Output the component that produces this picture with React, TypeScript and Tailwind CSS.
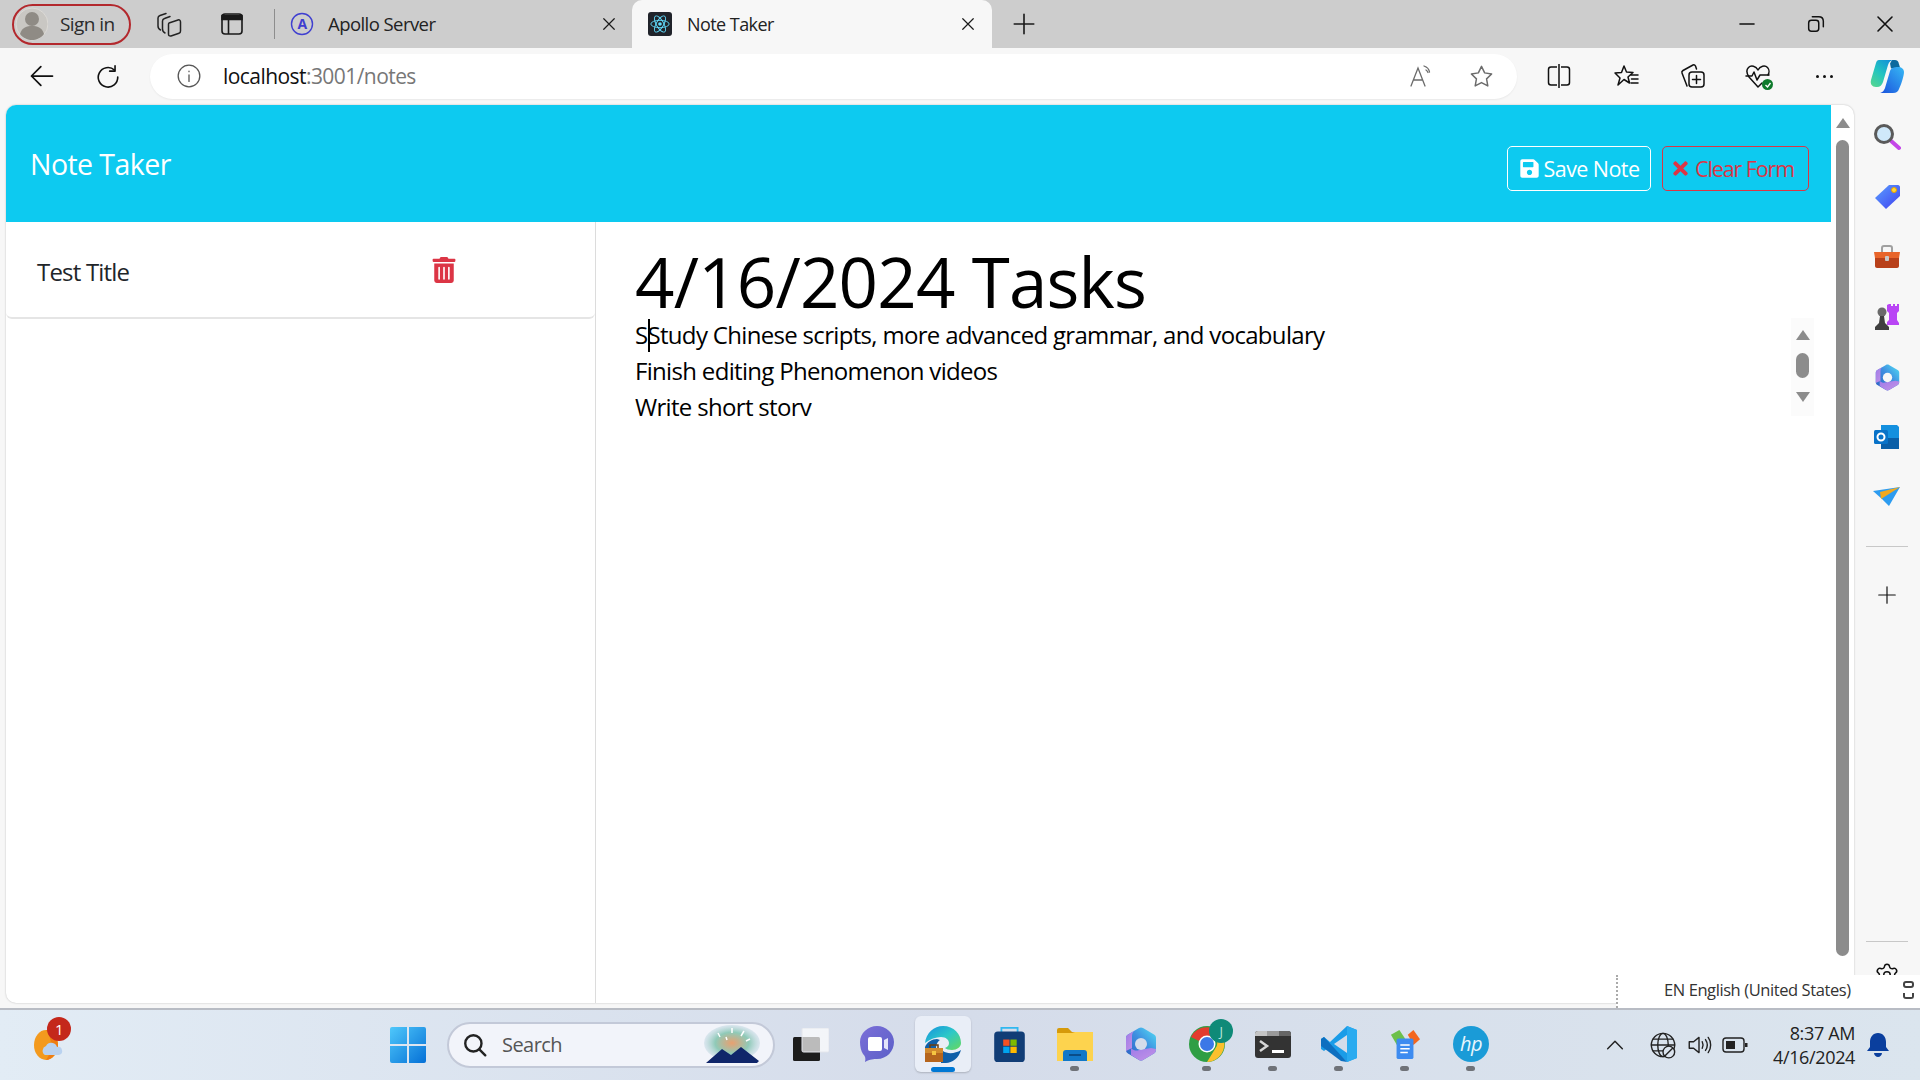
import React from "react";
import { FaSave, FaTimes, FaTrashAlt } from "react-icons/fa";
import { Settings } from "lucide-react";

const Stroke = ({ size = 24, w = 1.5, c = "#1a1a1a", children }: { size?: number; w?: number; c?: string; children: React.ReactNode }) => (
  <svg width={size} height={size} viewBox="0 0 24 24" fill="none" stroke={c} strokeWidth={w} strokeLinecap="round" strokeLinejoin="round">{children}</svg>
);

const TaskIcon = ({ children, dot, className = "" }: { children: React.ReactNode; dot?: boolean; className?: string }) => (
  <div className={"relative flex h-[56px] w-[66px] items-center justify-center " + className}>
    {children}
    {dot && <span className="absolute bottom-[1px] left-[28px] h-[5px] w-[9px] rounded-full bg-[#6f7278]" />}
  </div>
);

function M365({ id, w, h, hole }: { id: string; w: number; h: number; hole: string }) {
  return (
    <svg width={w} height={h} viewBox="0 0 32 34">
      <defs>
        <linearGradient id={id} x1="0" y1="1" x2="1" y2="0">
          <stop offset="0" stopColor="#2a5fc0" />
          <stop offset=".55" stopColor="#3f8ee0" />
          <stop offset="1" stopColor="#52e0f5" />
        </linearGradient>
        <linearGradient id={id + "p"} x1="0" y1="0" x2="1" y2="1">
          <stop offset="0" stopColor="#a07be8" />
          <stop offset="1" stopColor="#c494e6" />
        </linearGradient>
      </defs>
      <path d="M14 1 3 7.500C1.500 8.500 1 9.500 1 11v12c0 1.500.5 2.500 2 3.500l11 6.500c1.300.7 2.700.7 4 0l11-6.500c1.500-1 2-2 2-3.500V11c0-1.500-.5-2.500-2-3.500L18 1c-1.300-.7-2.700-.7-4 0z" fill={`url(#${id})`} />
      <path d="M1 11c0-1.500.5-2.500 2-3.500L9 4c-2 2-2 4-2 6v11L1 24z" fill={`url(#${id}p)`} />
      <path d="M6 21c3 3 6 3 8 2l12-2 5 1c0 2-.5 3.500-2 4.500L18 33c-1.300.7-2.700.7-4 0L6 28z" fill={`url(#${id}p)`} />
      <circle cx="16" cy="17" r="6" fill={hole} />
    </svg>
  );
}

function ReactLogo() {
  return (
    <div className="flex h-[24px] w-[24px] items-center justify-center rounded-[3px] bg-[#20232a]">
      <svg width="22" height="22" viewBox="-12 -12 24 24" fill="none" stroke="#61dafb" strokeWidth="1">
        <circle r="2" fill="#61dafb" stroke="none" />
        <ellipse rx="10" ry="4" />
        <ellipse rx="10" ry="4" transform="rotate(60)" />
        <ellipse rx="10" ry="4" transform="rotate(120)" />
      </svg>
    </div>
  );
}

function TabStrip() {
  return (
    <div className="flex h-[48px] shrink-0 items-center bg-[#cdcdcd]">
      <div className="ml-[12px] flex h-[41px] w-[119px] items-center rounded-full border-2 border-[#b3282d] pl-[2px]">
        <svg width="32" height="34" viewBox="0 0 32 34">
          <circle cx="16" cy="17" r="16" fill="#c9c7c3" stroke="#dcdad6" />
          <circle cx="16" cy="12" r="7" fill="#8f8b85" />
          <path d="M4 27c2-7 7-8 12-8s10 1 12 8c-3 4-8 6-12 6s-9-2-12-6z" fill="#8f8b85" />
        </svg>
        <span className="ml-[12px] text-[19px] leading-none text-[#2b2b2b]">Sign in</span>
      </div>
      <div className="ml-[25px] flex w-[26px] justify-center">
        <svg width="25" height="25" viewBox="0 0 25 25" fill="none" stroke="#222" strokeWidth="1.5" strokeLinejoin="round" strokeLinecap="round">
          <path d="M12 11 21 8c1.500-.5 2.500.5 2.500 2v9c0 1-.5 2-1.500 2.300L14 24c-1.500.3-2.500-.3-2.500-2V12.500c0-.6.1-1.200.5-1.500z" />
          <path d="M8 21c-2-1-2.500-2-2.500-4V9c0-1 .5-2 2-2.500L13 4.500" />
          <path d="M3.500 18C1.500 17 1 16 1 14V6c0-1 .5-2 2-2.500L9 1.500" />
        </svg>
      </div>
      <div className="ml-[37px] flex w-[26px] justify-center">
        <svg width="22" height="22" viewBox="0 0 22 22" fill="none" stroke="#1a1a1a" strokeWidth="1.6">
          <rect x="1" y="1" width="20" height="20" rx="3" />
          <path d="M1 2.500h20v4H1z" fill="#1a1a1a" />
          <path d="M7.500 6v15" />
        </svg>
      </div>
      <div className="ml-[29px] h-[30px] w-px bg-[#8d8d8d]" />
      <div className="flex h-full w-[357px] items-center pl-[15px]">
        <svg width="24" height="24" viewBox="0 0 24 24" fill="none">
          <circle cx="12" cy="12" r="10.500" stroke="#3f3fd0" strokeWidth="1.400" />
          <text x="12" y="17" textAnchor="middle" fontSize="14" fontWeight="700" fill="#3f3fd0" fontFamily="Open Sans">A</text>
        </svg>
        <span className="ml-[14px] text-[18.5px] leading-none text-[#222]">Apollo Server</span>
        <div className="ml-auto mr-[14px]"><Stroke size={18} w={1.6}><path d="M5 5l14 14M19 5 5 19" /></Stroke></div>
      </div>
      <div className="flex h-full w-[360px] items-center rounded-t-[10px] bg-[#f7f7f7] pl-[16px]">
        <ReactLogo />
        <span className="ml-[15px] text-[18px] leading-none text-[#222]">Note Taker</span>
        <div className="ml-auto mr-[15px]"><Stroke size={18} w={1.6}><path d="M5 5l14 14M19 5 5 19" /></Stroke></div>
      </div>
      <div className="ml-[19px]"><Stroke size={26} w={1.5}><path d="M12 3v18M3 12h18" /></Stroke></div>
      <div className="ml-auto flex items-center">
        <div className="mr-[46px]"><Stroke size={24} w={1.6} c="#111"><path d="M5 12h14" /></Stroke></div>
        <div className="mr-[46px]"><Stroke size={22} w={1.6} c="#111"><rect x="4" y="8" width="11" height="12" rx="3" /><path d="M8 4h7c3 0 5 2 5 5v6" /></Stroke></div>
        <div className="mr-[23px]"><Stroke size={24} w={1.6} c="#111"><path d="M5 5l14 14M19 5 5 19" /></Stroke></div>
      </div>
    </div>
  );
}

function Toolbar() {
  return (
    <div className="flex h-[57px] shrink-0 items-center bg-[#f7f7f7] pb-[1px]">
      <div className="ml-[28px]"><Stroke size={28} w={1.5} c="#111"><path d="M21 12H3M11 4l-8 8 8 8" /></Stroke></div>
      <div className="ml-[39px]"><Stroke size={26} w={1.5} c="#111"><path d="M18 6.500A9 9 0 1 0 21 13" /><path d="M18.500 2.500v5h-5" /></Stroke></div>
      <div className="ml-[29px] flex h-[45px] w-[1367px] items-center rounded-full bg-white pl-[26px] shadow-[0_1px_2px_rgba(0,0,0,0.06)]">
        <Stroke size={26} w={1.2} c="#555"><circle cx="12" cy="12" r="10" /><path d="M12 11v6M12 7.500v.5" /></Stroke>
        <span className="ml-[21px] text-[21px] leading-none text-[#777]"><span className="text-[#111]">localhost</span>:3001/notes</span>
        <div className="ml-auto mr-[22px] flex items-center">
          <svg width="26" height="26" viewBox="0 0 26 26" fill="none" stroke="#6b6b6b" strokeWidth="1.3" strokeLinecap="round">
            <path d="M2 23 9 5l7 18M4.500 17h9" />
            <path d="M15 3c3 1 5 3 5.500 6M17 7c1 .5 1.500 1.500 2 2.500" />
          </svg>
          <div className="ml-[33px]"><Stroke size={27} w={1.3} c="#6b6b6b"><path d="m12 3 2.800 5.800 6.200.9-4.500 4.400 1.100 6.300L12 17.400l-5.600 3 1.100-6.300L3 9.700l6.200-.9z" /></Stroke></div>
        </div>
      </div>
      <div className="ml-[29px] flex items-center">
        <svg width="26" height="26" viewBox="0 0 26 26" fill="none" stroke="#111" strokeWidth="1.5" strokeLinejoin="round">
          <path d="M11 4H5C3.500 4 2.500 5 2.500 6.500v13C2.500 21 3.500 22 5 22h6M15 4h6c1.500 0 2.500 1 2.500 2.500v13c0 1.500-1 2.500-2.500 2.500h-6" />
          <path d="M13 1v24" />
        </svg>
        <div className="ml-[41px]">
          <svg width="27" height="27" viewBox="0 0 27 27" fill="none" stroke="#111" strokeWidth="1.5" strokeLinejoin="round" strokeLinecap="round">
            <path d="m11 3 2.500 6 6.500.5-5 4.500 1.500 6-5.500-3.500L5 22l2-7-5-5 6.500-.5zM18 12h7M18.500 16h6.500M18 20h7" />
          </svg>
        </div>
        <div className="ml-[40px]">
          <svg width="26" height="26" viewBox="0 0 26 26" fill="none" stroke="#111" strokeWidth="1.5" strokeLinejoin="round" strokeLinecap="round">
            <path d="M7 23 2 10c-.4-1 .1-2 1-2.500L13 2c1-.4 2 .1 2.500 1l1 3" />
            <rect x="9" y="9" width="15" height="15" rx="3" />
            <path d="M16.500 12.500v8M12.500 16.500h8" />
          </svg>
        </div>
        <div className="relative ml-[39px]">
          <svg width="26" height="26" viewBox="0 0 26 26" fill="none" stroke="#111" strokeWidth="1.5" strokeLinejoin="round" strokeLinecap="round">
            <path d="M13 7c-2-4-7-5-9.500-2.500S2 11 4 14l9 10 4-4M13 7c2-4 7-5 9.500-2.500 2 2 1.700 5.500.5 7.500" />
            <path d="M1 13h6l2-4 3 8 3-5h9" />
          </svg>
          <span className="absolute bottom-[-1px] right-[-2px] flex h-[11px] w-[11px] items-center justify-center rounded-full bg-[#0f7b2c]">
            <svg width="8" height="8" viewBox="0 0 8 8" fill="none" stroke="white" strokeWidth="1.3"><path d="m1.500 4 2 2 3-4" /></svg>
          </span>
        </div>
        <div className="ml-[45px] flex gap-[4px]">
          <span className="h-[3px] w-[3px] rounded-full bg-[#111]" />
          <span className="h-[3px] w-[3px] rounded-full bg-[#111]" />
          <span className="h-[3px] w-[3px] rounded-full bg-[#111]" />
        </div>
        <div className="ml-[37px]">
          <svg width="35" height="35" viewBox="0 0 35 35">
            <defs>
              <linearGradient id="cp1" x1="0.8" y1="0" x2="0.1" y2="1"><stop offset="0" stopColor="#1592d8" /><stop offset=".5" stopColor="#22c4c0" /><stop offset="1" stopColor="#55d690" /></linearGradient>
              <linearGradient id="cp2" x1="1" y1="0" x2="0" y2="1"><stop offset="0" stopColor="#36b8f5" /><stop offset="1" stopColor="#1a50dc" /></linearGradient>
            </defs>
            <path d="M22 1h3c2 0 3 1 3.500 2.500l1.500 5-9 1-1-5z" fill="#0c6a9e" />
            <path d="M9 1h15c-3 0-5 1.500-6 5l-5 17c-1 3-3 5-6 5H6C2 28 0 25 1 21L6 4c.5-2 1.500-3 3-3z" fill="url(#cp1)" />
            <path d="M28 8c3.500 0 6 2 6 5 0 4-3 13-5 17-1 2.500-2.500 4-6 4H9c3.500 0 5-2.500 6-5l5-17c1-3 4-4 8-4z" fill="url(#cp2)" />
          </svg>
        </div>
      </div>
    </div>
  );
}

function MainScrollbar() {
  return (
    <div className="flex h-full w-[23px] shrink-0 flex-col items-center pt-[13px]">
      <span className="h-0 w-0 border-x-[7.500px] border-b-[10px] border-x-transparent border-b-[#8c8c8c]" />
      <span className="mt-[12px] h-[816px] w-[13px] rounded-full bg-[#8c8c8c]" />
    </div>
  );
}

function Page() {
  return (
    <div className="flex w-[1848px] shrink-0 overflow-hidden rounded-[10px] bg-white shadow-[0_0_2px_rgba(0,0,0,0.25)]">
      <div className="flex min-w-0 flex-1 flex-col">
        <div className="flex h-[117px] shrink-0 items-start justify-between bg-[#0dcaf0] pl-[24px] pr-[22px]">
          <span className="mt-[41px] text-[28.5px] leading-[36px] text-white">Note Taker</span>
          <div className="mt-[41px] flex gap-[11px]">
            <button className="flex h-[45px] w-[144px] items-center justify-center gap-[4px] rounded-[5px] border border-white text-[21.5px] leading-none text-white">
              <FaSave size={21} /> Save Note
            </button>
            <button className="flex h-[45px] w-[147px] items-center gap-[4px] rounded-[5px] border border-[#dc3545] pl-[7px] text-[21.5px] leading-none tracking-[-1.1px] text-[#dc3545]">
              <FaTimes size={21} /> Clear Form
            </button>
          </div>
        </div>
        <div className="flex min-h-0 flex-1">
          <div className="w-[590px] shrink-0 border-r border-[#dcdcdc]">
            <div className="flex h-[97px] items-center justify-between rounded-b-[6px] border-b-2 border-[#e5e5e5] pl-[31px] pr-[138px]">
              <span className="pt-[4px] text-[24px] leading-none tracking-[-0.8px] text-[#212529]">Test Title</span>
              <FaTrashAlt size={26} color="#dc3545" />
            </div>
          </div>
          <div className="min-w-0 flex-1 pl-[39px] pr-[17px]">
            <h1 className="mt-[23px] h-[73px] text-[69px] leading-[73px] tracking-[-0.8px] text-black">4/16/2024 Tasks</h1>
            <div className="relative flex h-[98px] justify-between overflow-hidden">
              <div className="-mt-[1px] text-[24px] leading-[36px] tracking-[-0.68px] text-black">
                <div className="relative">SStudy Chinese scripts, more advanced grammar, and vocabulary<span className="absolute left-[13px] top-[2px] h-[33px] w-[2px] bg-black" /></div>
                <div>Finish editing Phenomenon videos</div>
                <div>Write short story</div>
              </div>
              <div className="flex w-[23px] flex-col items-center bg-[#fbfbfb] pt-[12px]">
                <span className="h-0 w-0 border-x-[7px] border-b-[10px] border-x-transparent border-b-[#8c8c8c]" />
                <span className="mt-[13px] h-[25px] w-[13px] rounded-full bg-[#8c8c8c]" />
                <span className="mt-[14px] h-0 w-0 border-x-[7px] border-t-[10px] border-x-transparent border-t-[#8c8c8c]" />
              </div>
            </div>
          </div>
        </div>
      </div>
      <MainScrollbar />
    </div>
  );
}

function SideBar() {
  return (
    <div className="flex min-w-0 flex-1 flex-col items-center pt-[2px]">
      <div className="flex h-[60px] items-center justify-center">
        <svg width="28" height="28" viewBox="0 0 28 28">
          <path d="m17 17 9 8" stroke="#c445e8" strokeWidth="4" strokeLinecap="round" />
          <circle cx="11" cy="11" r="8.500" fill="#cfe8fa" stroke="#5a5a5a" strokeWidth="3" />
        </svg>
      </div>
      <div className="flex h-[60px] items-center justify-center">
        <svg width="26" height="26" viewBox="0 0 26 26">
          <defs><linearGradient id="tg" x1="0" y1="0" x2="1" y2="1"><stop offset="0" stopColor="#5aa0ff" /><stop offset="1" stopColor="#4040f0" /></linearGradient></defs>
          <path d="M15 1h9c1 0 2 1 2 2v9L12 25 1 14z" fill="url(#tg)" />
          <circle cx="20" cy="6" r="2.500" fill="#ffd83a" stroke="#e8a000" />
        </svg>
      </div>
      <div className="flex h-[60px] items-center justify-center">
        <svg width="28" height="24" viewBox="0 0 28 24">
          <path d="M9 7V3c0-1 1-2 2-2h6c1 0 2 1 2 2v4" fill="none" stroke="#a0a0a0" strokeWidth="2" />
          <path d="M1 7h26l-1 6H2z" fill="#e8642a" />
          <path d="M2 13h24v8c0 1-1 2-2 2H4c-1 0-2-1-2-2z" fill="#b8401a" />
          <rect x="12" y="11" width="4" height="5" rx="1" fill="#c8c8c8" />
        </svg>
      </div>
      <div className="flex h-[60px] items-center justify-center">
        <svg width="28" height="28" viewBox="0 0 28 28">
          <path d="M18 2h2v2h2V2h2v2h2V2h2v7l-2 2v7l2 3v2H16v-3l2-2v-7l-2-2V3z" fill="#b945f5" transform="translate(-2 -1)" />
          <circle cx="9" cy="9" r="4.500" fill="#6a6a6a" />
          <path d="M7 13h4l1 7 4 4v3H2v-3l4-4z" fill="#3f3f3f" />
        </svg>
      </div>
      <div className="flex h-[60px] items-center justify-center">
        <M365 id="ms" w={25} h={27} hole="#f7f7f7" />
      </div>
      <div className="flex h-[60px] items-center justify-center">
        <svg width="26" height="26" viewBox="0 0 26 26">
          <path d="M7 1h16l2 2v22H7z" fill="#1490df" />
          <path d="M7 14h18v11H7z" fill="#0a5fa8" />
          <rect x="0" y="6" width="14" height="14" rx="1.500" fill="#0872c8" />
          <circle cx="7" cy="13" r="3.500" fill="none" stroke="white" strokeWidth="2" />
        </svg>
      </div>
      <div className="flex h-[60px] items-center justify-center">
        <svg width="28" height="20" viewBox="0 0 28 20">
          <path d="M0 4 27 0 16 19 9 12z" fill="#2d9cf0" />
          <path d="M7 5 27 0 8 12l1 6z" fill="#f2a81e" />
        </svg>
      </div>
      <div className="mt-[19px] h-px w-[42px] bg-[#c8c8c8]" />
      <div className="mt-[37px]"><Stroke size={22} w={1.3} c="#111"><path d="M12 3v18M3 12h18" /></Stroke></div>
      <div className="mt-[335px] h-px w-[42px] bg-[#c8c8c8]" />
      <div className="mt-[20px] h-[15px]">
        <Settings size={26} strokeWidth={1.4} color="#111" />
      </div>
    </div>
  );
}

function Taskbar() {
  return (
    <div className="flex h-[72px] shrink-0 items-center border-t-2 border-[#b8bcc4] bg-gradient-to-r from-[#e2ecf5] via-[#d5dcea] to-[#dbe5ee]">
      <div className="relative ml-[33px] flex w-[34px] items-center">
        <svg width="30" height="32" viewBox="0 0 30 32">
          <ellipse cx="13" cy="16" rx="12" ry="15" fill="#f39a1e" />
          <path d="M13 1c6 0 12 7 12 15s-6 15-12 15c3-4 5-9 5-15S16 5 13 1z" fill="#ef7d12" />
          <path d="M12 26a5 5 0 0 1 1-9 6 6 0 0 1 11 1 4 4 0 0 1 2 8z" fill="#b9d2f0" />
        </svg>
        <span className="absolute left-[14px] top-[-12px] flex h-[24px] w-[24px] items-center justify-center rounded-full bg-[#c4281b] text-[15px] leading-none text-white">1</span>
      </div>
      <div className="ml-[323px]">
        <svg width="36" height="36" viewBox="0 0 36 36">
          <defs><linearGradient id="wn" x1="0" y1="0" x2="1" y2="1"><stop offset="0" stopColor="#4fc8fb" /><stop offset="1" stopColor="#0570d6" /></linearGradient></defs>
          <path d="M0 2a2 2 0 0 1 2-2h15v17H0zM19 0h15a2 2 0 0 1 2 2v15H19zM0 19h17v17H2a2 2 0 0 1-2-2zM19 19h17v15a2 2 0 0 1-2 2H19z" fill="url(#wn)" />
        </svg>
      </div>
      <div className="ml-[21px] flex h-[46px] w-[328px] items-center rounded-full border-2 border-[#c3c9d8] bg-[#f2f4fa] pl-[13px] pr-[13px]">
        <Stroke size={26} w={2.200} c="#222"><circle cx="10.500" cy="10.500" r="7.500" /><path d="m16 16 5.500 5.500" /></Stroke>
        <span className="ml-[14px] text-[20px] leading-none text-[#555]">Search</span>
        <div className="ml-auto">
          <svg width="56" height="40" viewBox="0 0 56 40">
            <defs><radialGradient id="fw" cx=".5" cy=".5" r=".6"><stop offset="0" stopColor="#e9a070" /><stop offset=".5" stopColor="#8fcab8" /><stop offset="1" stopColor="#d8dcf5" stopOpacity=".2" /></radialGradient></defs>
            <ellipse cx="28" cy="18" rx="28" ry="18" fill="url(#fw)" />
            <path d="M2 38 18 24l9 6 10-8 18 14-2 2z" fill="#10266a" />
            <path d="M14 8l2 4M28 3v5M40 6l-3 5M22 12l1 3M46 14l-4 2" stroke="white" strokeWidth="1.500" />
          </svg>
        </div>
      </div>
      <div className="ml-[3px] -mt-[2px] flex items-center">
        <TaskIcon>
          <svg width="36" height="33" viewBox="0 0 36 33">
            <rect x="0" y="9" width="27" height="24" rx="1.500" fill="#1c1c1c" />
            <rect x="9" y="0" width="27" height="24" rx="1.500" fill="#ffffff" fillOpacity=".7" stroke="#e4e6ec" />
          </svg>
        </TaskIcon>
        <TaskIcon>
          <svg width="34" height="36" viewBox="0 0 34 36">
            <defs><linearGradient id="ch" x1="0" y1="0" x2="1" y2="1"><stop offset="0" stopColor="#7b6fd8" /><stop offset="1" stopColor="#5b5fc7" /></linearGradient></defs>
            <path d="M17 0c9 0 17 7 17 16s-7 17-17 17c-3 0-7 0-12 3 1-4 0-6-2-8C1 25 0 20 0 16 0 7 8 0 17 0z" fill="url(#ch)" />
            <rect x="8" y="11" width="14" height="14" rx="2" fill="white" />
            <path d="M24 14l4-2v12l-4-2z" fill="#e4e4fa" />
          </svg>
        </TaskIcon>
        <div className="flex w-[66px] justify-center">
          <TaskIcon className="!w-[56px] rounded-[6px] bg-[#e9eef7] shadow-[0_1px_2px_rgba(0,0,0,0.2)]">
            <svg width="36" height="37" viewBox="0 0 36 37">
              <defs><linearGradient id="ed" x1="0" y1="0" x2="1" y2="1"><stop offset="0" stopColor="#1590e0" /><stop offset=".5" stopColor="#2cc8c8" /><stop offset="1" stopColor="#66d95c" /></linearGradient></defs>
              <path d="M0 17C1 7 9 0 18 0c11 0 18 8 18 17 0 4-4 7-9 7-3 0-6-1-7-2 2-1 4-2 4-5 0-3-3-6-8-6S5 13 0 17z" fill="url(#ed)" />
              <path d="M12 13c-5 0-10 3-12 8v3h11c0-5 1-8 4-10z" fill="#0f5fa8" />
              <path d="M36 24c-2 8-9 13-15 13h-5V25h2c4 3 12 3 18-1z" fill="#0f5fa8" />
              <path d="M0 22h18v14H0z" fill="#b5651d" />
              <path d="M0 22h18v5H0z" fill="#d08a2e" />
              <rect x="7" y="25" width="4" height="4" fill="#f5c542" />
              <path d="M5 22v-3h8v3" fill="none" stroke="#6b3f12" strokeWidth="1.500" />
            </svg>
            <span className="absolute bottom-[0px] left-[16px] h-[5px] w-[24px] rounded-full bg-[#0078d4]" />
          </TaskIcon>
        </div>
        <TaskIcon>
          <svg width="35" height="36" viewBox="0 0 34 40">
            <path d="M8 7V2h18v5" fill="none" stroke="#30b8f0" strokeWidth="2" />
            <rect x="0" y="6" width="34" height="34" rx="4" fill="#113d76" />
            <rect x="10" y="15" width="7" height="7" fill="#f25022" /><rect x="18" y="15" width="7" height="7" fill="#7fba00" />
            <rect x="10" y="23" width="7" height="7" fill="#00a4ef" /><rect x="18" y="23" width="7" height="7" fill="#ffb900" />
          </svg>
        </TaskIcon>
        <TaskIcon dot>
          <svg width="36" height="33" viewBox="0 0 36 33">
            <path d="M0 2a2 2 0 0 1 2-2h9l4 4h21v6H0z" fill="#d69a0a" />
            <path d="M0 5h15l3-1h18v29H0z" fill="#fdd34e" />
            <path d="M6 33V25a3 3 0 0 1 3-3h18a3 3 0 0 1 3 3v8z" fill="#1178c8" />
            <rect x="12" y="26" width="12" height="2" fill="#0a4d88" />
          </svg>
        </TaskIcon>
        <TaskIcon>
          <M365 id="mt" w={32} h={34} hole="#d5dcea" />
        </TaskIcon>
        <TaskIcon dot>
          <svg width="36" height="36" viewBox="0 0 36 36">
            <circle cx="18" cy="18" r="18" fill="#2f9e44" />
            <path d="M2 11A18 18 0 0 1 34 11H18a8 8 0 0 0-8 4z" fill="#e33b2e" />
            <path d="M34 11a18 18 0 0 1-16 25l8-13a8 8 0 0 0-1-12z" fill="#fbc02d" />
            <circle cx="18" cy="18" r="8.500" fill="white" />
            <circle cx="18" cy="18" r="7" fill="#3b78e7" />
          </svg>
          <span className="absolute left-[35px] top-[3px] flex h-[24px] w-[24px] items-center justify-center rounded-full bg-[#0f8a78] text-[13px] leading-none text-[#b8e6dc]">J</span>
        </TaskIcon>
        <TaskIcon dot>
          <svg width="36" height="27" viewBox="0 0 36 27">
            <rect x="0" y="0" width="36" height="27" rx="3" fill="#333" />
            <path d="M0 3a3 3 0 0 1 3-3h9v5H0z" fill="#c4c4c4" /><path d="M12 0h12v5H12z" fill="#9a9a9a" /><path d="M24 0h9a3 3 0 0 1 3 3v2H24z" fill="#666" />
            <path d="m5 10 7 5-7 5" fill="none" stroke="#d8d8d8" strokeWidth="2.500" />
            <rect x="17" y="19" width="12" height="3" fill="#fff" />
          </svg>
        </TaskIcon>
        <TaskIcon dot>
          <svg width="36" height="36" viewBox="0 0 36 36">
            <path d="M26 0 36 4v28l-10 4L9 20l-6 5-3-2v-10l3-2 6 5z" fill="#1a9ce8" />
            <path d="M26 0 36 4v28l-10 4z" fill="#2aabf0" />
            <path d="M26 9 13 18l13 9z" fill="#d5dcea" />
            <path d="M0 13l3-2 23 25-6-1L0 20z" fill="#0d6fc0" />
          </svg>
        </TaskIcon>
        <TaskIcon dot>
          <svg width="32" height="30" viewBox="0 0 34 32">
            <path d="M2 6 11 1l6 9-8 8z" fill="#6cc04a" />
            <path d="M20 6l6-5 7 10-7 6z" fill="#f4661e" />
            <rect x="8" y="10" width="18" height="22" rx="2" fill="#3d8bf0" />
            <path d="M12 17h10M12 21h10M12 25h8" stroke="white" strokeWidth="1.500" />
          </svg>
        </TaskIcon>
        <TaskIcon dot>
          <svg width="36" height="36" viewBox="0 0 36 36">
            <circle cx="18" cy="18" r="18" fill="#1a9bd7" />
            <text x="18" y="25" textAnchor="middle" fontSize="20" fontStyle="italic" fontWeight="400" fill="#e8f6fc" fontFamily="Open Sans">hp</text>
          </svg>
        </TaskIcon>
      </div>
      <div className="ml-[100px] flex items-center">
        <Stroke size={22} w={1.600} c="#222"><path d="m4 16 8-8 8 8" /></Stroke>
      </div>
      <div className="ml-[23px]">
        <Stroke size={28} w={1.200} c="#222"><circle cx="12" cy="12" r="10" /><ellipse cx="12" cy="12" rx="4.500" ry="10" /><path d="M2 12h20M3.500 7h17M3.500 17h17" /><circle cx="17" cy="18" r="5" fill="#dce4ee" /><path d="m14 21 6-6" /></Stroke>
      </div>
      <div className="ml-[9px]">
        <Stroke size={26} w={1.300} c="#222"><path d="M3 9v6h4l5 4V5L7 9z" /><path d="M15 9c1 2 1 4 0 6M18 7c2 3 2 7 0 10M20.500 5c3 4 3 10 0 14" /></Stroke>
      </div>
      <div className="ml-[10px]">
        <svg width="26" height="18" viewBox="0 0 26 18" fill="none"><rect x="1" y="2" width="21" height="14" rx="3" stroke="#222" strokeWidth="1.400" /><rect x="4" y="5" width="9" height="8" fill="#222" /><rect x="23" y="7" width="2.500" height="4" fill="#222" /></svg>
      </div>
      <div className="ml-[7px] flex w-[100px] flex-col items-end text-[18px] leading-[24px] tracking-[-0.02em] text-[#222]">
        <span>8:37 AM</span>
        <span>4/16/2024</span>
      </div>
      <div className="ml-[11px]">
        <svg width="24" height="26" viewBox="0 0 24 26"><path d="M12 1c-5 0-8 4-8 9v5l-3 4h22l-3-4v-5c0-5-3-9-8-9z" fill="#0a3f9e" /><path d="M8 21h8c0 2-2 4-4 4s-4-2-4-4z" fill="#0a3f9e" /></svg>
      </div>
    </div>
  );
}

export default function App() {
  return (
    <div className="relative flex h-[1080px] w-[1920px] flex-col overflow-hidden bg-[#f7f7f7] font-['Open_Sans','Noto_Sans',sans-serif] tracking-[-0.035em]">
      <TabStrip />
      <Toolbar />
      <div className="flex min-h-0 flex-1 pl-[6px] pb-[5px]">
        <Page />
        <SideBar />
      </div>
      <Taskbar />
      <div className="absolute bottom-[72px] right-0 flex h-[33px] w-[304px] items-center border-l-2 border-dotted border-[#aaa] bg-white pb-[2px] pl-[46px] text-[16.5px] leading-none tracking-[-0.025em] text-[#333]">
        EN English (United States)
        <div className="absolute right-[6px] top-[6px] flex flex-col gap-[5px]">
          <span className="h-[7px] w-[11px] rounded-[3px] border-2 border-[#444]" />
          <span className="h-[6px] w-[11px] rounded-b-[3px] border-2 border-t-0 border-[#444]" />
        </div>
      </div>
    </div>
  );
}
